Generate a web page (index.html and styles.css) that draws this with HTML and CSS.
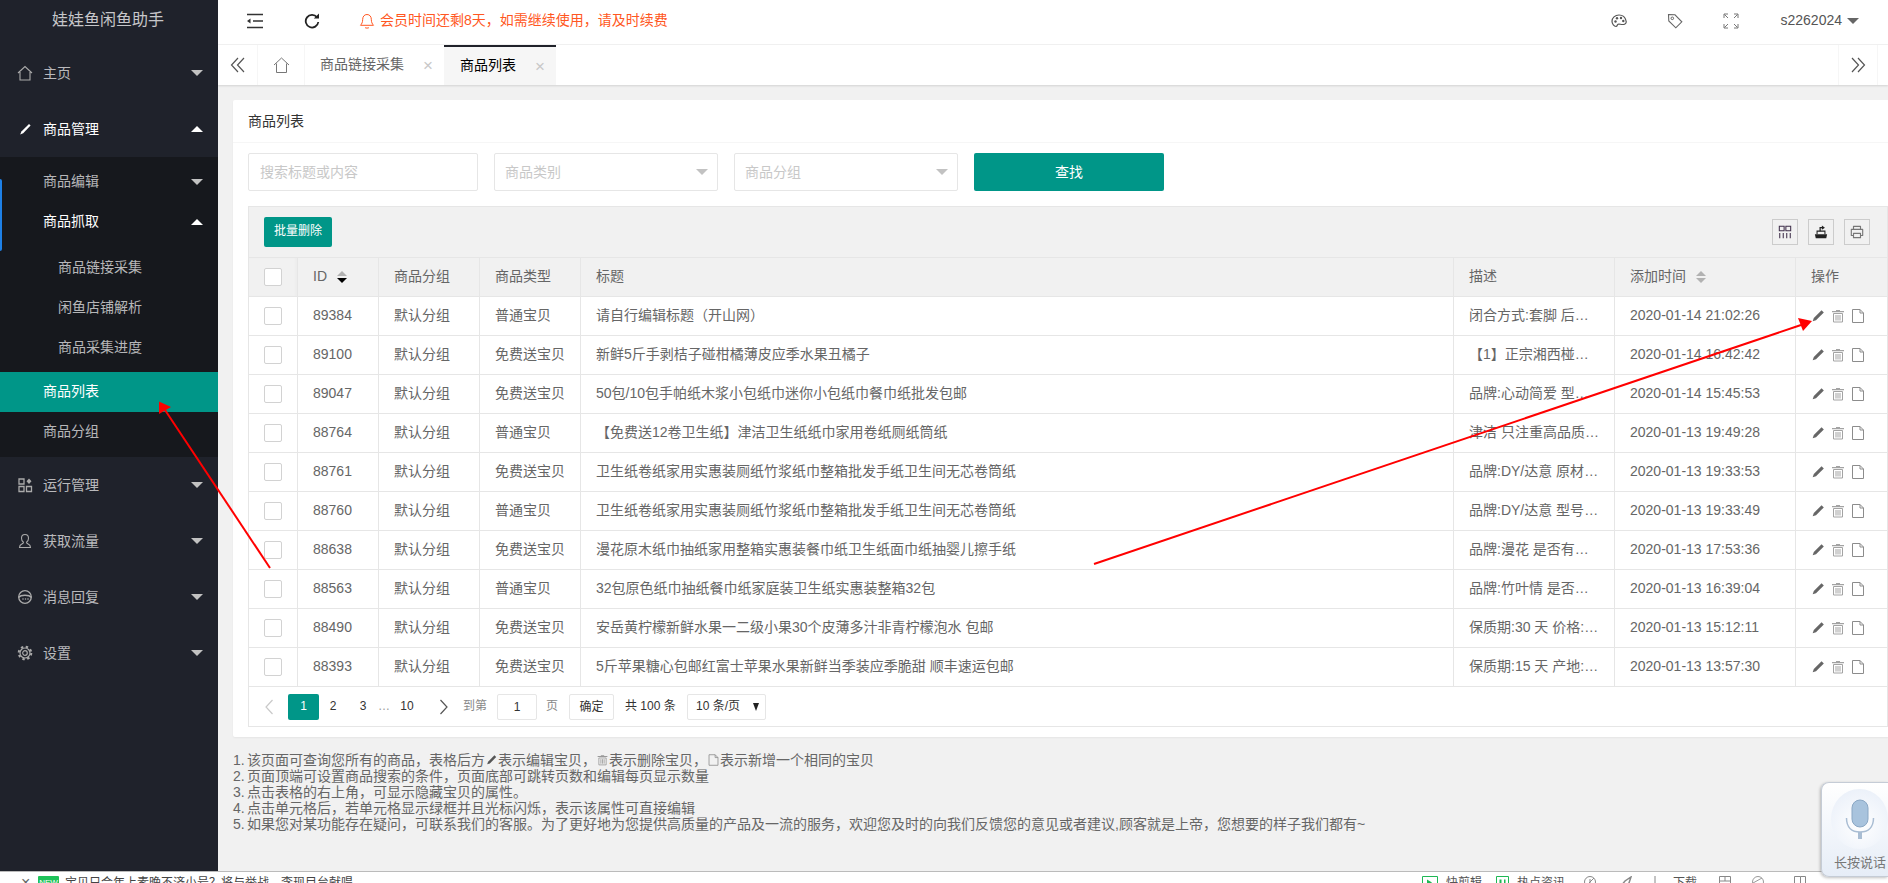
FILE: index.html
```html
<!DOCTYPE html>
<html lang="zh-CN">
<head>
<meta charset="utf-8">
<title>商品列表</title>
<link rel="stylesheet" href="styles.css">
</head>
<body>
<svg class="defs" width="0" height="0" aria-hidden="true">
  <symbol id="i-pencil" viewBox="0 0 16 16"><path d="M11.600 2.200l2.200 2.200-7.800 7.800-3.300 1.100 1.100-3.300z" fill="currentColor"/></symbol>
  <symbol id="i-trash" viewBox="0 0 16 16"><path d="M6 3V2h4v1h4v1.200H2V3z" fill="currentColor"/><path d="M3.500 5.500h9v8.500h-9zM6 7v5.500M8 7v5.500M10 7v5.500" fill="none" stroke="currentColor" stroke-width="1"/></symbol>
  <symbol id="i-file" viewBox="0 0 16 16"><path d="M2.500 1.500h7.500l3.500 3.500v9.500h-11zM10 1.500V5h3.500" fill="none" stroke="currentColor" stroke-width="1"/></symbol>
</svg>
<div class="app">
  <aside class="sidebar">
    <div class="logo">娃娃鱼闲鱼助手</div>
    <div class="nav-item"><svg class="nav-icon" viewBox="0 0 16 16"><path d="M1 8l7-6.500L15 8M3 7v8h10V7" fill="none" stroke="currentColor" stroke-width="1.100"/></svg><span>主页</span><i class="caret down"></i></div>
    <div class="nav-item open"><svg class="nav-icon" viewBox="0 0 16 16"><path d="M12 3l1.600 1.600-7.400 7.600-3 1.200 1.200-3z" fill="currentColor"/></svg><span>商品管理</span><i class="caret up"></i></div>
    <div class="subnav">
      <b class="indicator"></b>
      <div class="sub-item"><span>商品编辑</span><i class="caret down"></i></div>
      <div class="sub-item open"><span>商品抓取</span><i class="caret up"></i></div>
      <div class="third">
        <div class="third-item">商品链接采集</div>
        <div class="third-item">闲鱼店铺解析</div>
        <div class="third-item">商品采集进度</div>
      </div>
      <div class="sub-item active"><span>商品列表</span></div>
      <div class="sub-item"><span>商品分组</span></div>
    </div>
    <div class="nav-item"><svg class="nav-icon" viewBox="0 0 16 16"><path d="M2 2h5v5H2zM2 9.500h5v5H2zM9.500 9.500h5v5h-5z" fill="none" stroke="currentColor" stroke-width="1.300"/><path d="M12 1.500l2.500 2.800L12 7 9.500 4.300z" fill="currentColor"/></svg><span>运行管理</span><i class="caret down"></i></div>
    <div class="nav-item"><svg class="nav-icon" viewBox="0 0 16 16"><path d="M8 1.500c2.200 0 3.500 1.700 3.500 3.800 0 1.700-.8 3-1.800 3.700-.4.800.2 1.300 1.500 1.900 1.500.6 2.300 1.300 2.300 3.600H2.500c0-2.300.8-3 2.300-3.600 1.300-.6 1.900-1.100 1.500-1.900-1-.7-1.800-2-1.800-3.700 0-2.100 1.300-3.800 3.500-3.800z" fill="none" stroke="currentColor" stroke-width="1.100"/></svg><span>获取流量</span><i class="caret down"></i></div>
    <div class="nav-item"><svg class="nav-icon" viewBox="0 0 16 16"><circle cx="8" cy="8" r="6.300" fill="none" stroke="currentColor" stroke-width="1.300"/><path d="M1.500 8.500C4 5.500 12 5.500 14.500 8.500" fill="none" stroke="currentColor" stroke-width="1.300"/><circle cx="6" cy="10" r=".8" fill="currentColor"/><circle cx="8.500" cy="10" r=".8" fill="currentColor"/><circle cx="11" cy="10" r=".8" fill="currentColor"/></svg><span>消息回复</span><i class="caret down"></i></div>
    <div class="nav-item"><svg class="nav-icon" viewBox="0 0 16 16"><circle cx="8" cy="8" r="2.300" fill="none" stroke="currentColor" stroke-width="1.200"/><circle cx="8" cy="8" r="5" fill="none" stroke="currentColor" stroke-width="1.200"/><circle cx="8" cy="8" r="6.300" fill="none" stroke="currentColor" stroke-width="2" stroke-dasharray="2.400 2.550"/></svg><span>设置</span><i class="caret down"></i></div>
  </aside>

  <main class="main">
    <header class="topbar">
      <svg class="top-icon first" viewBox="0 0 16 16"><path d="M0 1.500h16M6 8h10M0 14.500h16" stroke="#333" stroke-width="1.600" fill="none"/><path d="M0 8l3.500-2.500v5z" fill="#333"/></svg>
      <svg class="top-icon refresh" viewBox="0 0 16 16"><path d="M13 4.300A6.300 6.300 0 1 0 14.300 9" fill="none" stroke="#222" stroke-width="1.800"/><path d="M9.800 5.500h5.200V.6z" fill="#222"/></svg>
      <svg class="top-icon bell" viewBox="0 0 16 16"><path d="M8 1.500c-2.800 0-4.300 2.200-4.300 4.800 0 3-1 4.700-2.200 6h13c-1.200-1.300-2.200-3-2.200-6 0-2.600-1.500-4.800-4.300-4.800zM6 14.500c.5.800 3.500.8 4 0" fill="none" stroke="#ff5722" stroke-width="1"/></svg>
      <span class="notice">会员时间还剩8天，如需继续使用，请及时续费</span>
      <div class="top-right">
        <svg class="top-icon" viewBox="0 0 16 16"><path d="M8 2C4 2 1 4.800 1 8.200c0 3 2.200 5.300 4 5.300 1.500 0 1-1.800 2-2.300 1.500-.7 3 .8 6 .2 2-.5 2.500-2 2-3.700C14.200 4.200 11.500 2 8 2z" fill="none" stroke="#555" stroke-width="1.200"/><circle cx="4.500" cy="8.500" r="1.200" fill="#555"/><circle cx="6" cy="5.300" r="1.200" fill="#555"/><circle cx="10" cy="5" r="1.200" fill="#555"/><circle cx="12.300" cy="8" r="1.200" fill="#555"/></svg>
        <svg class="top-icon" viewBox="0 0 16 16"><path d="M1.500 1.500l6.500.3 6.800 7-6 6-7-6.800z" fill="none" stroke="#666" stroke-width="1.100"/><circle cx="5.300" cy="5.300" r="1.300" fill="none" stroke="#666"/></svg>
        <svg class="top-icon" viewBox="0 0 16 16"><path d="M1 5V1h4M11 1h4v4M15 11v4h-4M5 15H1v-4M1.500 1.500l3.500 3.500M14.500 1.500L11 5M14.500 14.500L11 11M1.500 14.500L5 11" fill="none" stroke="#777" stroke-width="1"/></svg>
        <span class="user">s2262024</span><i class="caret user-caret"></i>
      </div>
    </header>
    <nav class="tabbar">
      <div class="tab-btn"><svg width="16" height="16" viewBox="0 0 16 16"><path d="M8 1L1.500 8 8 15M14 1L7.500 8 14 15" fill="none" stroke="#555" stroke-width="1.200"/></svg></div>
      <div class="tab-home"><svg width="17" height="16" viewBox="0 0 17 16"><path d="M1 8l7.500-7L16 8M3.500 6.500v9h10v-9" fill="none" stroke="#777" stroke-width="1"/></svg></div>
      <div class="tab"><span>商品链接采集</span><em>×</em></div>
      <div class="tab current"><span>商品列表</span><em>×</em></div>
      <div class="tab-btn right"><svg width="16" height="16" viewBox="0 0 16 16"><path d="M2 1l6.500 7L2 15M8 1l6.500 7L8 15" fill="none" stroke="#555" stroke-width="1.200"/></svg></div>
    </nav>

    <div class="content">
      <section class="card">
        <div class="card-title">商品列表</div>
        <div class="card-body">
          <div class="search-row">
            <div class="field wide">搜索标题或内容</div>
            <div class="field select">商品类别<i class="caret gray"></i></div>
            <div class="field select">商品分组<i class="caret gray"></i></div>
            <div class="search-btn">查找</div>
          </div>
          <div class="toolbar">
            <div class="batch">批量删除</div>
            <div class="tools">
              <div class="tool"><svg viewBox="0 0 16 16"><path d="M1.500 1.500h5.500v5H1.500zM9 1.500h5.500v5H9zM2 9v6M6 9v6M10 9v6M14 9v6" fill="none" stroke="#3f2f4a" stroke-width="1.200"/></svg></div>
              <div class="tool"><svg viewBox="0 0 16 16"><path d="M1 10.500h14l-1 4.500H2z" fill="#222"/><path d="M3.500 10.500V7h9v3.500" fill="none" stroke="#222" stroke-width="1.200"/><path d="M7 7V3h2.500" fill="none" stroke="#222" stroke-width="1.400"/><path d="M9 .6l3.500 2.400L9 5.400z" fill="#222"/></svg></div>
              <div class="tool"><svg viewBox="0 0 16 16"><path d="M4 5V1.500h8V5M4 12H1.500V5h13v7H12M4 9.500h8v5H4z" fill="none" stroke="#777" stroke-width="1.300" stroke-linejoin="round"/></svg></div>
            </div>
          </div>
          <table class="grid">
            <colgroup>
              <col class="c-check"><col class="c-id"><col class="c-group"><col class="c-type"><col class="c-title"><col class="c-desc"><col class="c-time"><col class="c-ops">
            </colgroup>
            <thead>
              <tr><th><i class="check"></i></th><th>ID<span class="sort"><i class="sort-up"></i><i class="sort-down dark"></i></span></th><th>商品分组</th><th>商品类型</th><th>标题</th><th>描述</th><th>添加时间<span class="sort"><i class="sort-up"></i><i class="sort-down"></i></span></th><th>操作</th></tr>
            </thead>
            <tbody>
              <tr><td><i class="check"></i></td><td>89384</td><td>默认分组</td><td>普通宝贝</td><td>请自行编辑标题（开山网）</td><td>闭合方式:套脚 后跟高度:中跟</td><td>2020-01-14 21:02:26</td><td><div class="ops"><svg class="op-edit"><use href="#i-pencil"/></svg><svg class="op-del"><use href="#i-trash"/></svg><svg class="op-new"><use href="#i-file"/></svg></div></td></tr>
              <tr><td><i class="check"></i></td><td>89100</td><td>默认分组</td><td>免费送宝贝</td><td>新鲜5斤手剥桔子碰柑橘薄皮应季水果丑橘子</td><td>【1】正宗湘西椪柑现摘现发</td><td>2020-01-14 16:42:42</td><td><div class="ops"><svg class="op-edit"><use href="#i-pencil"/></svg><svg class="op-del"><use href="#i-trash"/></svg><svg class="op-new"><use href="#i-file"/></svg></div></td></tr>
              <tr><td><i class="check"></i></td><td>89047</td><td>默认分组</td><td>免费送宝贝</td><td>50包/10包手帕纸木浆小包纸巾迷你小包纸巾餐巾纸批发包邮</td><td>品牌:心动简爱 型号:手帕纸</td><td>2020-01-14 15:45:53</td><td><div class="ops"><svg class="op-edit"><use href="#i-pencil"/></svg><svg class="op-del"><use href="#i-trash"/></svg><svg class="op-new"><use href="#i-file"/></svg></div></td></tr>
              <tr><td><i class="check"></i></td><td>88764</td><td>默认分组</td><td>普通宝贝</td><td>【免费送12卷卫生纸】津洁卫生纸纸巾家用卷纸厕纸筒纸</td><td>津洁 只注重高品质的生活用纸</td><td>2020-01-13 19:49:28</td><td><div class="ops"><svg class="op-edit"><use href="#i-pencil"/></svg><svg class="op-del"><use href="#i-trash"/></svg><svg class="op-new"><use href="#i-file"/></svg></div></td></tr>
              <tr><td><i class="check"></i></td><td>88761</td><td>默认分组</td><td>免费送宝贝</td><td>卫生纸卷纸家用实惠装厕纸竹浆纸巾整箱批发手纸卫生间无芯卷筒纸</td><td>品牌:DY/达意 原材料:竹浆</td><td>2020-01-13 19:33:53</td><td><div class="ops"><svg class="op-edit"><use href="#i-pencil"/></svg><svg class="op-del"><use href="#i-trash"/></svg><svg class="op-new"><use href="#i-file"/></svg></div></td></tr>
              <tr><td><i class="check"></i></td><td>88760</td><td>默认分组</td><td>普通宝贝</td><td>卫生纸卷纸家用实惠装厕纸竹浆纸巾整箱批发手纸卫生间无芯卷筒纸</td><td>品牌:DY/达意 型号:卷纸筒纸</td><td>2020-01-13 19:33:49</td><td><div class="ops"><svg class="op-edit"><use href="#i-pencil"/></svg><svg class="op-del"><use href="#i-trash"/></svg><svg class="op-new"><use href="#i-file"/></svg></div></td></tr>
              <tr><td><i class="check"></i></td><td>88638</td><td>默认分组</td><td>免费送宝贝</td><td>漫花原木纸巾抽纸家用整箱实惠装餐巾纸卫生纸面巾纸抽婴儿擦手纸</td><td>品牌:漫花 是否有机:否</td><td>2020-01-13 17:53:36</td><td><div class="ops"><svg class="op-edit"><use href="#i-pencil"/></svg><svg class="op-del"><use href="#i-trash"/></svg><svg class="op-new"><use href="#i-file"/></svg></div></td></tr>
              <tr><td><i class="check"></i></td><td>88563</td><td>默认分组</td><td>普通宝贝</td><td>32包原色纸巾抽纸餐巾纸家庭装卫生纸实惠装整箱32包</td><td>品牌:竹叶情 是否进口:否</td><td>2020-01-13 16:39:04</td><td><div class="ops"><svg class="op-edit"><use href="#i-pencil"/></svg><svg class="op-del"><use href="#i-trash"/></svg><svg class="op-new"><use href="#i-file"/></svg></div></td></tr>
              <tr><td><i class="check"></i></td><td>88490</td><td>默认分组</td><td>免费送宝贝</td><td>安岳黄柠檬新鲜水果一二级小果30个皮薄多汁非青柠檬泡水 包邮</td><td>保质期:30 天 价格:30 元以上</td><td>2020-01-13 15:12:11</td><td><div class="ops"><svg class="op-edit"><use href="#i-pencil"/></svg><svg class="op-del"><use href="#i-trash"/></svg><svg class="op-new"><use href="#i-file"/></svg></div></td></tr>
              <tr><td><i class="check"></i></td><td>88393</td><td>默认分组</td><td>免费送宝贝</td><td>5斤苹果糖心包邮红富士苹果水果新鲜当季装应季脆甜 顺丰速运包邮</td><td>保质期:15 天 产地:中国大陆</td><td>2020-01-13 13:57:30</td><td><div class="ops"><svg class="op-edit"><use href="#i-pencil"/></svg><svg class="op-del"><use href="#i-trash"/></svg><svg class="op-new"><use href="#i-file"/></svg></div></td></tr>
            </tbody>
          </table>
          <div class="pager">
            <span class="pg pg-prev"><svg width="10" height="16" viewBox="0 0 10 16"><path d="M8.500 1L2 8l6.500 7" fill="none" stroke="#c9c9c9" stroke-width="1.200"/></svg></span>
            <span class="pg pg-cur">1</span>
            <span class="pg pg-2">2</span>
            <span class="pg pg-3">3</span>
            <span class="pg pg-dots">…</span>
            <span class="pg pg-10">10</span>
            <span class="pg pg-next"><svg width="10" height="16" viewBox="0 0 10 16"><path d="M1.500 1L8 8l-6.500 7" fill="none" stroke="#555" stroke-width="1.200"/></svg></span>
            <span class="pg-text">到第</span>
            <span class="pg-input">1</span>
            <span class="pg-text page-word">页</span>
            <span class="pg-ok">确定</span>
            <span class="pg-total">共 100 条</span>
            <span class="pg-size">10 条/页<i class="pg-arrow"></i></span>
          </div>
        </div>
      </section>
      <div class="notes">
        <p><span class="num">1.</span>该页面可查询您所有的商品，表格后方<svg class="note-edit"><use href="#i-pencil"/></svg>表示编辑宝贝，<svg class="note-del"><use href="#i-trash"/></svg>表示删除宝贝，<svg class="note-new"><use href="#i-file"/></svg>表示新增一个相同的宝贝</p>
        <p><span class="num">2.</span>页面顶端可设置商品搜索的条件，页面底部可跳转页数和编辑每页显示数量</p>
        <p><span class="num">3.</span>点击表格的右上角，可显示隐藏宝贝的属性。</p>
        <p><span class="num">4.</span>点击单元格后，若单元格显示绿框并且光标闪烁，表示该属性可直接编辑</p>
        <p><span class="num">5.</span>如果您对某功能存在疑问，可联系我们的客服。为了更好地为您提供高质量的产品及一流的服务，欢迎您及时的向我们反馈您的意见或者建议,顾客就是上帝，您想要的样子我们都有~</p>
      </div>
    </div>
  </main>
</div>

<footer class="bottombar">
  <span class="bb-close">×</span>
  <span class="bb-new">NEW</span>
  <span class="bb-news">宝贝只会年上素晚不济小号？将与举战，李现目台献唱</span>
  <div class="bb-right">
    <svg class="bb-icon green-a" viewBox="0 0 16 14"><path d="M.5.500h15v13H.5z" fill="none" stroke="#1eb854"/><path d="M5 3.500l5 3-5 3z" fill="#1eb854"/></svg>
    <span class="bb-label">快剪辑</span>
    <svg class="bb-icon green-b" viewBox="0 0 13 14"><path d="M.5.500h12v13H.5z" fill="none" stroke="#1eb854"/><path d="M3.500 3.500h2v4h-2zM8 3.500h1.500v4H8z" fill="#1eb854"/></svg>
    <span class="bb-label">热点资讯</span>
    <svg class="bb-icon gray-a" viewBox="0 0 12 12"><circle cx="6" cy="6" r="5.500" fill="none" stroke="#888"/><path d="M2 10l8-8M6 3v6" fill="none" stroke="#888"/></svg>
    <svg class="bb-icon gray-b" viewBox="0 0 12 12"><path d="M1 10l4-5 6-4-2 6-4 4z" fill="none" stroke="#888" stroke-width="1.500"/></svg>
    <svg class="bb-icon gray-c" viewBox="0 0 12 12"><path d="M6 0v10M3 9h6" fill="none" stroke="#888"/></svg>
    <span class="bb-label dl">下载</span>
    <svg class="bb-icon gray-d" viewBox="0 0 12 12"><path d="M.5.500h11v11H.5zM.5 5h11M6 .5V5" fill="none" stroke="#888"/></svg>
    <svg class="bb-icon gray-e" viewBox="0 0 12 12"><circle cx="6" cy="6" r="5.500" fill="none" stroke="#999"/><path d="M1 7l9-5" fill="none" stroke="#999"/></svg>
    <svg class="bb-icon gray-f" viewBox="0 0 12 12"><path d="M.5.500h6v11H.5zM6.500.5h5v11h-5" fill="none" stroke="#888"/></svg>
  </div>
</footer>

<aside class="voice">
  <div class="mic">
    <svg width="30" height="40" viewBox="0 0 30 40"><rect x="7" y="1" width="16" height="27" rx="8" fill="#a8c3dd" stroke="#8aa7c4"/><path d="M1.500 19c0 9 5 14 13.500 14s13.500-5 13.500-14" fill="none" stroke="#a9bdd3" stroke-width="1.500"/><path d="M13 33h4v7h-4z" fill="#a9bdd3"/></svg>
  </div>
  <div class="voice-label">长按说话</div>
</aside>

<svg class="annot" viewBox="0 0 1888 883" aria-hidden="true">
  <path d="M270 568L165 410" stroke="#f00" stroke-width="2" fill="none"/>
  <path d="M159 401.500l12 5.500-12 7z" fill="#f00"/>
  <path d="M1094 564L1801 325" stroke="#f00" stroke-width="2" fill="none"/>
  <path d="M1812 321l-14-3 5 13z" fill="#f00"/>
</svg>
</body>
</html>
```
FILE: styles.css
```css
* { box-sizing: border-box; }
html, body { margin: 0; height: 883px; overflow: hidden; }
body {
  position: relative;
  font: 14px/1.4 "Liberation Sans", "Noto Sans CJK SC", sans-serif;
  color: #666;
  background: #f1f1f1;
}
i, em { font-style: normal; }
.defs { position: absolute; }

.app { display: flex; height: 871px; }

/* sidebar */
.sidebar { position: relative; flex: 0 0 218px; background: #1f222b; color: rgba(255,255,255,.7); }
.logo { height: 45px; line-height: 39px; padding-left: 52px; font-size: 16px; color: rgba(255,255,255,.75); }
.nav-item { display: flex; align-items: center; height: 56px; padding: 0 15px 0 17px; }
.nav-item > span { margin: 2px 0 0 10px; }
.nav-item.open { color: #fff; }
.nav-icon { width: 16px; height: 16px; color: #aaa; flex: none; }
.nav-item.open .nav-icon { color: #fff; }
.caret { margin-left: auto; width: 0; height: 0; border-left: 6px solid transparent; border-right: 6px solid transparent; flex: none; }
.caret.down { border-top: 6px solid #c2c2c2; }
.caret.up { border-bottom: 6px solid #fff; }
.subnav { position: relative; background: #16181d; padding: 5px 0; height: 300px; }
.indicator { position: absolute; left: 0; top: 22px; width: 2px; height: 72px; background: #1e80e6; border-radius: 0 2px 2px 0; }
.sub-item { display: flex; align-items: center; height: 40px; padding: 0 15px 0 43px; }
.sub-item.open { color: #fff; }
.sub-item.active { background: #009688; color: #fff; margin-top: 5px; }
.third { padding-top: 5px; }
.third-item { height: 40px; line-height: 40px; padding-left: 58px; }

/* header */
.main { flex: 1; min-width: 0; display: flex; flex-direction: column; }
.topbar { display: flex; align-items: center; height: 45px; background: #fff; border-bottom: 1px solid #f2f2f2; padding-bottom: 3px; }
.top-icon { width: 16px; height: 16px; flex: none; }
.top-icon.first { margin-left: 29px; }
.top-icon.refresh { margin-left: 41px; }
.top-icon.bell { margin-left: 39px; }
.notice { margin-left: 5px; color: #ff5722; font-size: 14px; }
.top-right { margin-left: auto; display: flex; align-items: center; gap: 40px; padding-right: 29px; }
.user { margin-left: 1px; color: #555; }
.caret.user-caret { margin-left: -35px; border-top: 6px solid #666; }

/* tabs */
.tabbar { display: flex; height: 40px; background: #fff; box-shadow: 0 1px 2px rgba(0,0,0,.13); position: relative; }
.tab-btn { width: 40px; display: flex; align-items: center; justify-content: center; border-right: 1px solid #f6f6f6; }
.tab-btn.right { margin-left: auto; margin-right: 10px; border-left: 1px solid #f6f6f6; }
.tab-home { width: 47px; display: flex; align-items: center; justify-content: center; border-right: 1px solid #f6f6f6; }
.tab { display: flex; align-items: center; width: 139px; padding-left: 15px; color: #666; }
.tab em { margin-left: 19px; font-size: 17px; color: #c8c8c8; line-height: 1; }
.tab.current { width: 112px; padding-left: 16px; background: #f6f6f6; color: #000; border-top: 2px solid #20222a; }
.tab.current em { margin-left: 19px; }

/* card */
.content { flex: 1; padding: 15px 0 0 15px; overflow: hidden; }
.card { background: #fff; border-radius: 2px 0 0 2px; box-shadow: 0 1px 2px rgba(0,0,0,.05); }
.card-title { height: 43px; line-height: 42px; padding-left: 15px; color: #333; border-bottom: 1px solid #f6f6f6; }
.card-body { padding: 10px 0 10px 15px; }
.search-row { display: flex; height: 38px; }
.field { position: relative; display: flex; align-items: center; height: 38px; width: 224px; margin-left: 16px; padding: 2px 9px 0 10px; border: 1px solid #e6e6e6; border-radius: 2px; color: #c8c8c8; }
.field.wide { width: 230px; margin-left: 0; padding-left: 11px; }
.caret.gray { margin-top: -2px; border-top: 6px solid #c2c2c2; }
.search-btn { width: 190px; margin-left: 16px; background: #009688; color: #fff; border-radius: 2px; text-align: center; line-height: 38px; }

/* toolbar */
.toolbar { display: flex; align-items: center; height: 52px; margin-top: 15px; padding: 0 17px 0 15px; background: #f1f1f1; border: 1px solid #e6e6e6; border-right-width: 1px; }
.batch { width: 68px; height: 30px; line-height: 29px; text-align: center; font-size: 12px; color: #fff; background: #009688; border-radius: 2px; }
.tools { margin-left: auto; display: flex; gap: 10px; }
.tool { display: flex; align-items: center; justify-content: center; width: 26px; height: 26px; border: 1px solid #ccc; }
.tool svg { width: 14px; height: 14px; }

/* table */
.grid { table-layout: fixed; width: 1640px; border-collapse: separate; border-spacing: 0; border-left: 1px solid #e6e6e6; }
.c-check { width: 49px; } .c-id { width: 81px; } .c-group, .c-type { width: 101px; }
.c-title { width: 873px; } .c-desc { width: 161px; } .c-time { width: 181px; } .c-ops { width: 92px; }
.grid th, .grid td { height: 39px; padding: 0 15px; border-right: 1px solid #e6e6e6; border-bottom: 1px solid #e6e6e6; white-space: nowrap; overflow: hidden; text-overflow: ellipsis; font-weight: 400; text-align: left; color: #666; }
.grid th { background: #f1f1f1; }
.grid th:first-child { box-shadow: inset -2px 0 2px rgba(0,0,0,.02); }
.check { display: block; width: 18px; height: 18px; background: #fff; border: 1px solid #d2d2d2; border-radius: 2px; }
.sort { display: inline-flex; flex-direction: column; gap: 2px; margin-left: 10px; vertical-align: 5px; }
.sort-up, .sort-down { display: block; width: 0; height: 0; border-left: 5px solid transparent; border-right: 5px solid transparent; }
.sort-up { border-bottom: 5px solid #b2b2b2; }
.sort-down { border-top: 5px solid #b2b2b2; }
.sort-down.dark { border-top-color: #000; }
.ops { display: flex; gap: 4px; margin-left: -1px; }
.ops svg { width: 16px; height: 16px; }
.op-edit { color: #666; }
.op-del { color: #a3a3a3; }
.op-new { color: #8c8c8c; }

/* pager */
.pager { display: flex; align-items: center; height: 40px; width: 1640px; border: 1px solid #e6e6e6; border-top: 0; font-size: 12px; color: #333; }
.pg { display: flex; align-items: center; justify-content: center; height: 26px; }
.pg-prev { width: 39px; }
.pg-cur { width: 31px; background: #009688; color: #fff; border-radius: 2px; }
.pg-2 { width: 28px; } .pg-3 { width: 32px; } .pg-dots { width: 10px; color: #999; } .pg-10 { width: 36px; } .pg-next { width: 38px; }
.pg-text { color: #888; width: 25px; }
.pg-text.page-word { width: 14px; margin-left: 9px; }
.pg-input { width: 40px; height: 26px; margin-left: 9px; line-height: 24px; text-align: center; border: 1px solid #e6e6e6; border-radius: 2px; }
.pg-ok { width: 45px; height: 26px; margin-left: 9px; line-height: 24px; text-align: center; border: 1px solid #e6e6e6; border-radius: 2px; }
.pg-total { margin-left: 11px; width: 52px; white-space: nowrap; }
.pg-size { position: relative; display: flex; align-items: center; width: 79px; height: 26px; margin-left: 10px; padding-left: 8px; border: 1px solid #e6e6e6; border-radius: 2px; }
.pg-arrow { position: absolute; right: 6px; top: 8px; width: 0; height: 0; border-left: 3.500px solid transparent; border-right: 3.500px solid transparent; border-top: 8px solid #222; }

/* notes */
.notes { margin-top: 15px; line-height: 16px; color: #666; }
.notes p { margin: 0; white-space: nowrap; }
.num { display: inline-block; width: 14px; }
.note-edit, .note-del, .note-new { width: 13px; height: 14px; vertical-align: -2px; }
.note-edit { color: #555; }
.note-del { color: #999; }
.note-new { color: #8c8c8c; }

/* browser strip */
.bottombar { position: relative; display: flex; height: 12px; overflow: hidden; background: #fff; border-top: 1px solid #bbb; padding-top: 4px; font-size: 12px; line-height: 14px; color: #444; }
.bb-close { margin-left: 21px; width: 17px; font-size: 16px; color: #666; }
.bb-new { width: 21px; height: 14px; background: #1ec25a; color: #fff; font-size: 8px; text-align: center; border-radius: 1px; }
.bb-news { margin-left: 6px; white-space: nowrap; }
.bb-right { margin-left: auto; display: flex; align-items: flex-start; padding-right: 82px; color: #555; }
.bb-icon { display: block; flex: none; width: 12px; height: 12px; }
.bb-icon.green-a { width: 16px; height: 14px; }
.bb-icon.green-b { width: 13px; height: 14px; margin-left: 14px; }
.bb-label { margin-left: 8px; white-space: nowrap; }
.bb-icon.gray-a { margin-left: 19px; }
.bb-icon.gray-b { margin-left: 24px; }
.bb-icon.gray-c { margin-left: 17px; }
.bb-label.dl { margin-left: 12px; }
.bb-icon.gray-d { margin-left: 22px; }
.bb-icon.gray-e { margin-left: 21px; }
.bb-icon.gray-f { margin-left: 30px; }

/* voice widget */
.voice { position: absolute; left: 1821px; top: 782px; width: 67px; height: 95px; background: linear-gradient(180deg, #fff, #e6edf7); border: 1px solid #c5ccd6; border-right: 0; border-radius: 8px 0 0 8px; box-shadow: -1px 1px 3px rgba(0,0,0,.25); }
.mic { display: flex; align-items: center; justify-content: center; width: 57px; height: 60px; margin: 6px 0 0 9px; border-radius: 50%; background: radial-gradient(circle at 50% 60%, #fff, #e6edf8); }
.voice-label { margin: 5px 0 0 12px; font-size: 13px; color: #777; white-space: nowrap; }

.annot { position: absolute; left: 0; top: 0; width: 1888px; height: 883px; pointer-events: none; }
```
